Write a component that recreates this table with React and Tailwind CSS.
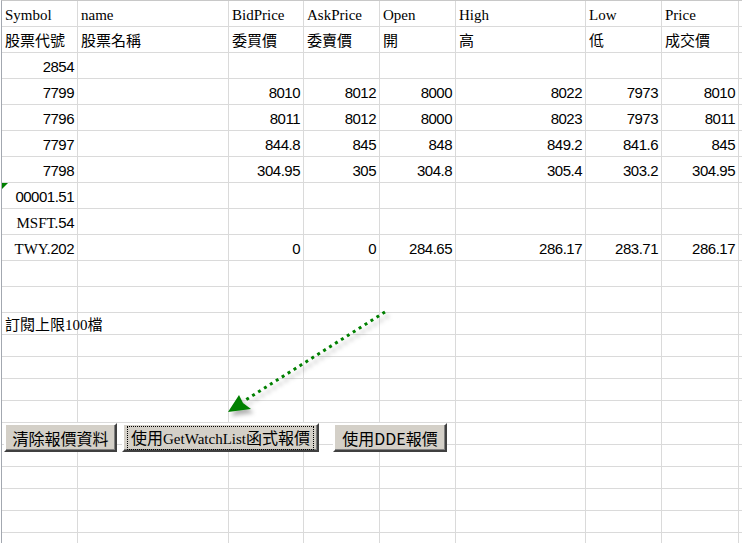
import React from 'react';

const SERIF = "font-['Liberation_Serif','Noto_Sans_CJK_TC',serif]";
const grid = 'grid grid-cols-[76px_151px_75px_76px_76px_130px_76px_77px_120px]';

// sheet data, one array per row (columns A..I)
const rows = [
  ['Symbol', 'name', 'BidPrice', 'AskPrice', 'Open', 'High', 'Low', 'Price', 'Volume'],
  ['股票代號', '股票名稱', '委買價', '委賣價', '開', '高', '低', '成交價', '總量'],
  ['2854', '', '', '', '', '', '', '', ''],
  ['7799', '', '8010', '8012', '8000', '8022', '7973', '8010', ''],
  ['7796', '', '8011', '8012', '8000', '8023', '7973', '8011', ''],
  ['7797', '', '844.8', '845', '848', '849.2', '841.6', '845', ''],
  ['7798', '', '304.95', '305', '304.8', '305.4', '303.2', '304.95', ''],
  ['00001.51', '', '', '', '', '', '', '', ''],
  ['MSFT.54', '', '', '', '', '', '', '', ''],
  ['TWY.202', '', '0', '0', '284.65', '286.17', '283.71', '286.17', ''],
  ['', '', '', '', '', '', '', '', ''],
  ['', '', '', '', '', '', '', '', ''],
  ['訂閱上限100檔', '', '', '', '', '', '', '', ''],
];

const isNum = (v) => /^[0-9.]+$/.test(v);

function CellText({ value }) {
  // symbols like MSFT.54 mix serif letters with the thin digits
  const m = value.match(/^([A-Z]+\.)(\d+)$/);
  if (m) {
    return (
      <span className="whitespace-nowrap">
        <span className={`${SERIF} text-[15px]`}>{m[1]}</span>
        <span className="font-['Liberation_Sans',sans-serif] text-[15px] tracking-[-0.5px]">{m[2]}</span>
      </span>
    );
  }
  if (isNum(value)) {
    return <span className="whitespace-nowrap font-['Liberation_Sans',sans-serif] text-[15px] tracking-[-0.5px]">{value}</span>;
  }
  return <span className={`whitespace-nowrap ${SERIF} text-[15px]`}>{value}</span>;
}

function Cell({ value, right, tall }) {
  const h = tall ? 'h-[26px] pb-[2px]' : 'h-[22px] pb-0';
  return (
    <div
      className={`relative flex items-end border-r border-b border-[#dadada] leading-[18px] text-black overflow-visible ${h} ${
        right ? 'justify-end pr-[3px]' : 'pl-[3px]'
      }`}
    >
      {value !== '' && <CellText value={value} />}
    </div>
  );
}

function Arrow() {
  return (
    <svg className="absolute left-[220px] top-[300px] pointer-events-none" width="180" height="125" viewBox="0 0 180 125">
      <defs>
        <filter id="sh" x="-20%" y="-20%" width="140%" height="140%">
          <feDropShadow dx="3" dy="4" stdDeviation="2" floodColor="#000" floodOpacity="0.3" />
        </filter>
      </defs>
      <g filter="url(#sh)">
        <line x1="165" y1="12" x2="24" y2="101" stroke="#008000" strokeWidth="3" strokeDasharray="3 4" />
        <polygon points="8,112 19,95 23,103 31,109" fill="#008000" />
      </g>
    </svg>
  );
}

function Btn({ children, left, width, focus }) {
  return (
    <button
      className={`absolute top-[423px] h-[29px] bg-[#d4d0c8] border-2 border-t-white border-l-white border-r-[#404040] border-b-[#404040] shadow-[inset_-1px_-1px_0_#808080] flex items-center justify-center text-[16px] text-black font-['Noto_Sans_CJK_TC',sans-serif] leading-none ${left} ${width}`}
    >
      {focus ? (
        <span className="border border-dotted border-black px-[3px] py-[2px] whitespace-nowrap">{children}</span>
      ) : (
        <span className="whitespace-nowrap">{children}</span>
      )}
    </button>
  );
}

export default function App() {
  const blanks = Array.from({ length: 11 }, () => Array(9).fill(''));
  const all = [...rows, ...blanks];

  return (
    <div className="relative w-[742px] h-[543px] overflow-hidden bg-white">
      <div className="pl-px">
        <div className={`${grid} border-t border-t-[#c8c8c8] border-l border-l-[#a3a8b0]`}>
          {all.map((r, ri) =>
            r.map((v, ci) => (
              <Cell
                key={`${ri}-${ci}`}
                value={v}
                right={ri >= 2 && ri <= 9 && v !== '' && (ci === 0 || isNum(v))}
                tall={ri < 12}
              />
            ))
          )}
        </div>
      </div>

      {/* error indicator on A8 */}
      <div className="absolute left-[2px] top-[183px] w-0 h-0 border-t-[6px] border-t-[#008000] border-r-[6px] border-r-transparent" />

      <Arrow />

      <Btn left="left-[4px]" width="w-[113px]">清除報價資料</Btn>
      <Btn left="left-[122px]" width="w-[197px]" focus>
        使用<span className={`${SERIF} text-[15px]`}>GetWatchList</span>函式報價
      </Btn>
      <Btn left="left-[333px]" width="w-[114px]">使用DDE報價</Btn>
    </div>
  );
}
